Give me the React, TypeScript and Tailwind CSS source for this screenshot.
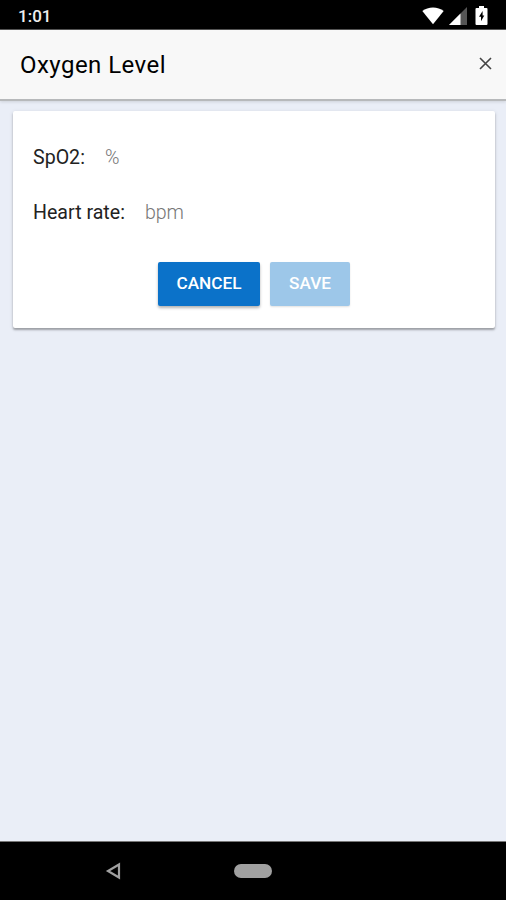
import React from 'react';

interface FieldRowProps {
  label: string;
  unit: string;
}

function StatusBar() {
  return (
    <div className="h-[30px] shrink-0 bg-black border-b border-[#555] flex items-center justify-between pl-[18px] pr-[18px]">
      <span className="text-[17px] leading-none font-medium text-[#eee] pt-[3px]">1:01</span>
      <div className="flex items-center pt-[2px]">
        {/* Wifi */}
        <svg width="22" height="18" viewBox="0 0 22 18" className="mr-[5px]">
          <path d="M11 17.3 L0.3 4 C6 -0.8 16 -0.8 21.7 4 Z" fill="#fff" />
        </svg>
        {/* Signal */}
        <svg width="18" height="18" viewBox="0 0 18 18" className="mr-[8px]">
          <path d="M18 0 V18 H0 Z" fill="#555" />
          <path d="M11.5 6.5 V18 H0 Z" fill="#fff" />
        </svg>
        {/* Battery */}
        <svg width="13" height="19" viewBox="0 0 13 19">
          <path d="M4 0 H9 V2 H11.5 Q12.5 2 12.5 3 V18 Q12.5 19 11.5 19 H1.5 Q0.5 19 0.5 18 V3 Q0.5 2 1.5 2 H4 Z" fill="#fff" />
          <path d="M7.6 5 L4 10.8 H6 V15.2 L9.3 9.4 H7.6 Z" fill="#000" />
        </svg>
      </div>
    </div>
  );
}

function FieldRow({ label, unit }: FieldRowProps) {
  return (
    <div className="h-[55px] flex items-center gap-[20px] text-[19.6px]">
      <label className="text-[#222]">{label}</label>
      <span className="font-light text-[#777]">{unit}</span>
    </div>
  );
}

export default function App() {
  return (
    <div className="w-full h-[900px] flex flex-col overflow-hidden bg-[#eaeef7] font-['Roboto',sans-serif]">
      <StatusBar />

      <header className="h-[71px] shrink-0 bg-[#f8f8f8] border-b-2 border-[#b7b9bb] shadow-[0_1px_3px_rgba(0,0,0,0.12)] flex items-center justify-between pl-[20px] pr-[14px]">
        <h1 className="text-[24px] leading-none font-normal tracking-[0.45px] text-black pt-px">Oxygen Level</h1>
        <button aria-label="Close" className="-mt-[3px]">
          <svg width="13" height="13" viewBox="0 0 13 13" stroke="#444" strokeWidth="1.6">
            <path d="M1 1 L12 12 M12 1 L1 12" />
          </svg>
        </button>
      </header>

      <main className="flex-1 pt-[10px] pl-[13px] pr-[11px]">
        <div className="h-[217px] bg-white rounded-[2px] px-[20px] pt-[19px] shadow-[0_2px_2px_rgba(0,0,0,0.28),0_1px_4px_rgba(0,0,0,0.12)]">
          <FieldRow label="SpO2:" unit="%" />
          <FieldRow label="Heart rate:" unit="bpm" />

          <div className="mt-[22px] flex justify-center gap-[10px] text-[17.2px] font-medium text-white">
            <button className="w-[102px] h-[44px] pb-px rounded-[2px] bg-[#0b72c9] shadow-[0_2px_3px_rgba(0,0,0,0.3)]">CANCEL</button>
            <button className="w-[80px] h-[44px] pb-px rounded-[2px] bg-[#9dc7e9] shadow-[0_1px_2px_rgba(0,0,0,0.12)]" disabled>SAVE</button>
          </div>
        </div>
      </main>

      {/* Navigation bar */}
      <nav className="h-[59px] shrink-0 bg-black border-t border-[#777] flex items-center">
        <svg width="16" height="18" viewBox="0 0 16 18" className="ml-[105px]">
          <path d="M14 2.5 V15.5 L3 9 Z" fill="none" stroke="#a0a0a0" strokeWidth="2.2" />
        </svg>
        <div className="ml-[113px] w-[38px] h-[14px] rounded-full bg-[#a0a0a0]" />
      </nav>
    </div>
  );
}
